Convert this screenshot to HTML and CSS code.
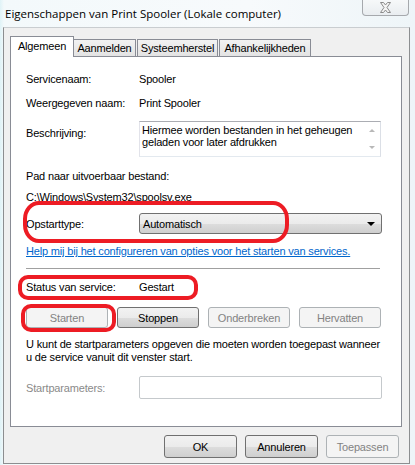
FILE: index.html
```html
<!DOCTYPE html>
<html lang="nl">
<head>
    <meta charset="UTF-8">
    <title>Eigenschappen van Print Spooler</title>
    <link rel="stylesheet" href="styles.css">
</head>
<body>
    <div class="window">
        <div class="titlebar">
            <span class="title">Eigenschappen van Print Spooler (Lokale computer)</span>
            <div class="close-btn">
                <svg width="13" height="11" viewBox="0 0 13 11">
                    <path d="M1.5 0.5 H4.5 L6.5 3 L8.5 0.5 H11.5 L8 5.5 L11.5 10.5 H8.5 L6.5 8 L4.5 10.5 H1.5 L5 5.5 Z" fill="#f4f4f4" stroke="#8b8b8b" stroke-width="1" stroke-linejoin="round"/>
                </svg>
            </div>
        </div>

        <div class="dialog">
            <div class="tabs">
                <div class="tab active">Algemeen</div>
                <div class="tab tab-aanmelden">Aanmelden</div>
                <div class="tab tab-herstel">Systeemherstel</div>
                <div class="tab tab-afh">Afhankelijkheden</div>
            </div>

            <div class="panel">
                <div class="row row-name">
                    <span class="label">Servicenaam:</span>
                    <span class="value">Spooler</span>
                </div>
                <div class="row row-display">
                    <span class="label">Weergegeven naam:</span>
                    <span class="value">Print Spooler</span>
                </div>
                <div class="row row-desc">
                    <span class="label">Beschrijving:</span>
                    <div class="desc-box">
                        <div class="desc-text">Hiermee worden bestanden in het geheugen geladen voor later afdrukken</div>
                        <div class="desc-scroll">
                            <span class="arrow-up"></span>
                            <span class="arrow-down"></span>
                        </div>
                    </div>
                </div>
                <div class="row row-path-label">Pad naar uitvoerbaar bestand:</div>
                <div class="row row-path">C:\Windows\System32\spoolsv.exe</div>
                <div class="row row-startup">
                    <span class="label">Opstarttype:</span>
                    <div class="select">
                        <span>Automatisch</span>
                        <span class="select-arrow"></span>
                    </div>
                </div>
                <div class="row row-link"><a href="#">Help mij bij het configureren van opties voor het starten van services.</a></div>
                <div class="separator"></div>
                <div class="row row-status">
                    <span class="label">Status van service:</span>
                    <span class="value">Gestart</span>
                </div>
                <div class="service-buttons">
                    <button class="btn" disabled>Starten</button>
                    <button class="btn">Stoppen</button>
                    <button class="btn" disabled>Onderbreken</button>
                    <button class="btn" disabled>Hervatten</button>
                </div>
                <p class="hint">U kunt de startparameters opgeven die moeten worden toegepast wanneer u de service vanuit dit venster start.</p>
                <div class="row row-params">
                    <span class="label disabled">Startparameters:</span>
                    <div class="params-input"></div>
                </div>

                <div class="mark mark-startup"></div>
                <div class="mark mark-status"></div>
                <div class="mark mark-start"></div>
            </div>

            <div class="dialog-buttons">
                <button class="btn">OK</button>
                <button class="btn">Annuleren</button>
                <button class="btn" disabled>Toepassen</button>
            </div>
        </div>
    </div>
</body>
</html>
```

FILE: styles.css
```css
body {
    margin: 0;
    width: 415px;
    height: 465px;
    overflow: hidden;
    font-family: "Liberation Sans", Arial, sans-serif;
    font-size: 11px;
    letter-spacing: -0.17px;
    color: #000;
    background: linear-gradient(to right, #dff3f7 0px, #f3f9fb 4px, #f7fafc 60%, #eef5f8 100%);
}

.window {
    width: 415px;
    height: 465px;
}

.titlebar {
    height: 27px;
    display: flex;
    justify-content: space-between;
    align-items: flex-start;
}

.title {
    font-family: "Open Sans", "Noto Sans", sans-serif;
    font-size: 11.5px;
    letter-spacing: 0;
    padding: 6px 0 0 5px;
    color: #000;
}

.close-btn {
    width: 45px;
    height: 16px;
    margin-right: 6px;
    margin-top: -1px;
    border: 1px solid #a6a9ad;
    border-top: none;
    border-radius: 0 0 4px 4px;
    background: linear-gradient(#f7f9fa, #e9edf0);
    display: flex;
    align-items: center;
    justify-content: center;
}

.dialog {
    margin-left: 3px;
    width: 405px;
    height: 435px;
    background-color: #f0f0f0;
    border: 1px solid #8c8e90;
    border-top-color: #c9cdd0;
    padding: 0;
}

.tabs {
    display: flex;
    align-items: flex-end;
    padding: 8px 0 0 6px;
    margin-bottom: -1px;
    height: 21px;
    position: relative;
    z-index: 1;
}

.tab {
    box-sizing: border-box;
    height: 18px;
    border: 1px solid #898c95;
    background: linear-gradient(#f2f2f2, #e3e3e3);
    text-align: center;
    line-height: 17px;
    margin-left: 1px;
}

.tab.active {
    margin-left: 0;
    width: 64px;
    height: 21px;
    background: #fff;
    border-bottom: none;
    line-height: 19px;
    position: relative;
    z-index: 1;
}

.tab-aanmelden {
    margin-left: -1px;
    width: 63px;
}

.tab-herstel {
    width: 81px;
}

.tab-afh {
    width: 92px;
}

.panel {
    position: relative;
    box-sizing: border-box;
    margin-left: 6px;
    width: 392px;
    height: 371px;
    background: #fff;
    border: 1px solid #898c95;
    padding: 0 19px 0 15px;
}

.row {
    display: flex;
    align-items: center;
    line-height: 14px;
}

.label {
    width: 113px;
    flex-shrink: 0;
}

.label.disabled {
    color: #8a8a8a;
}

.row-name {
    margin-top: 15px;
}

.row-display {
    margin-top: 10px;
}

.row-desc {
    margin-top: 11px;
    align-items: flex-start;
}

.row-desc .label {
    padding-top: 5px;
}

.desc-box {
    box-sizing: border-box;
    width: 242px;
    height: 36px;
    border: 1px solid;
    border-color: #abadb3 #dbdfe6 #e3e9ef #e2e3ea;
    display: flex;
}

.desc-text {
    flex: 1;
    padding: 2px 0 0 2px;
    line-height: 12px;
}

.desc-scroll {
    width: 17px;
    display: flex;
    flex-direction: column;
    align-items: center;
    justify-content: space-between;
    padding: 7px 0 7px;
}

.arrow-up {
    width: 0;
    height: 0;
    border-left: 3px solid transparent;
    border-right: 3px solid transparent;
    border-bottom: 3px solid #b8b8b8;
}

.arrow-down {
    width: 0;
    height: 0;
    border-left: 3px solid transparent;
    border-right: 3px solid transparent;
    border-top: 3px solid #b8b8b8;
}

.row-path-label {
    margin-top: 12px;
}

.row-path {
    margin-top: 7px;
}

.row-startup {
    margin-top: 9px;
}

.select {
    box-sizing: border-box;
    width: 243px;
    height: 21px;
    border: 1px solid #707070;
    border-radius: 3px;
    background: linear-gradient(#f2f2f2 0%, #ebebeb 50%, #dddddd 51%, #cfcfcf 100%);
    display: flex;
    align-items: center;
    justify-content: space-between;
    padding: 0 6px 0 3px;
}

.select-arrow {
    width: 0;
    height: 0;
    border-left: 4px solid transparent;
    border-right: 4px solid transparent;
    border-top: 4px solid #000;
}

.row-link {
    margin-top: 10px;
}

.row-link a {
    color: #0066cc;
    text-decoration: underline;
}

.separator {
    margin-top: 10px;
    height: 1px;
    width: 354px;
    background: #a0a0a0;
}

.row-status {
    margin-top: 11px;
}

.service-buttons {
    margin-top: 13px;
    display: flex;
    justify-content: space-between;
    width: 355px;
}

.btn {
    box-sizing: border-box;
    width: 82px;
    height: 21px;
    padding: 0;
    font-family: "Liberation Sans", Arial, sans-serif;
    font-size: 11px;
    letter-spacing: -0.17px;
    color: #000;
    border: 1px solid #707070;
    border-radius: 3px;
    background: linear-gradient(#f2f2f2 0%, #ebebeb 50%, #dddddd 51%, #cfcfcf 100%);
}

.btn:disabled {
    color: #838383;
    border-color: #adb2b5;
    background: #f4f4f4;
}

.hint {
    margin: 10px 0 0 0;
    line-height: 13px;
}

.row-params {
    margin-top: 12px;
}

.params-input {
    box-sizing: border-box;
    width: 244px;
    height: 23px;
    border: 1px solid #c5c9cc;
    border-radius: 2px;
    background: #fff;
}

.mark {
    position: absolute;
    box-sizing: border-box;
    border: 4px solid #ed1c24;
}

.mark-startup {
    left: 12px;
    top: 144px;
    width: 266px;
    height: 42px;
    border-radius: 16px / 18px;
}

.mark-status {
    left: 7px;
    top: 218px;
    width: 180px;
    height: 25px;
    border-radius: 10px;
}

.mark-start {
    left: 10px;
    top: 247px;
    width: 95px;
    height: 28px;
    border-radius: 10px;
}

.dialog-buttons {
    display: flex;
    justify-content: flex-end;
    gap: 8px;
    margin-top: 8px;
    padding-right: 10px;
}

.dialog-buttons .btn {
    width: 73px;
    height: 23px;
}
```
